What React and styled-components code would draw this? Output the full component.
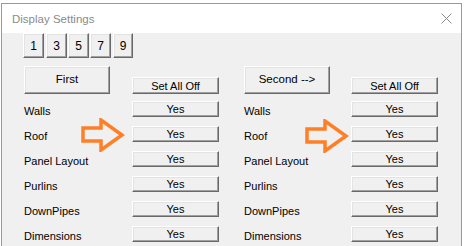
import React from "react";
import styled, { createGlobalStyle } from "styled-components";

const GlobalStyle = createGlobalStyle`
html, body {
  margin: 0;
  padding: 0;
  background: #ffffff;
  overflow: hidden;
}
body {
  font-family: "Liberation Sans", Arial, sans-serif;
}
`;

const Window = styled.div`
margin: 3px 0 0 1px;
width: 459px;
border: 1px solid #9a9a9a;
border-bottom: none;
background: #f0f0f0;
`;

const TitleBar = styled.div`
display: flex;
align-items: center;
justify-content: space-between;
height: 29px;
padding: 0 9px 0 10px;
background: #ffffff;
`;

const Title = styled.div`
font-size: 11.5px;
color: #8a8a8a;
`;

const Body = styled.div`
position: relative;
padding: 0 0 0 22px;
height: 213px;
overflow: hidden;
`;

const NumRow = styled.div`
display: flex;
margin-left: -1px;
`;

const Button = styled.div`
box-sizing: border-box;
display: flex;
align-items: center;
justify-content: center;
flex-shrink: 0;
background: #f0f0f0;
border-top: 1px solid #ffffff;
border-left: 1px solid #ffffff;
border-right: 1px solid #696969;
border-bottom: 1px solid #696969;
box-shadow: inset -1px -1px 0 #a0a0a0, inset 1px 1px 0 #e3e3e3;
font-size: 11px;
color: #000;
white-space: nowrap;
`;

const NumButton = styled(Button)`
width: ${(p) => p.$w}px;
height: 25px;
margin-left: ${(p) => p.$gap}px;
font-size: 12px;
`;

const Columns = styled.div`
display: flex;
margin-top: 8px;
`;

const Group = styled.div`
width: 220px;
flex-shrink: 0;
display: flex;
flex-direction: column;
`;

const HeaderRow = styled.div`
display: flex;
align-items: flex-end;
margin-bottom: 7px;
`;

const BigButton = styled(Button)`
width: 86px;
height: 28px;
padding-bottom: 2px;
font-size: 11.5px;
`;

const SmallButton = styled(Button)`
width: 87px;
height: ${(p) => p.$h || 16}px;
margin-left: ${(p) => p.$offset}px;
`;

const Row = styled.div`
display: flex;
align-items: center;
height: 16px;
margin-bottom: 9px;
`;

const Label = styled.div`
width: ${(p) => p.$offset + 86}px;
flex-shrink: 0;
font-size: 11px;
padding-top: 3px;
color: #000;
`;

const Arrow = styled.svg`
position: absolute;
left: ${(p) => p.$x}px;
top: ${(p) => p.$y}px;
`;

const nums = [
  ["1", 21, 0],
  ["3", 21, 2],
  ["5", 21, 1],
  ["7", 21, 1],
  ["9", 20, 2],
];

const rows = ["Walls", "Roof", "Panel Layout", "Purlins", "DownPipes", "Dimensions"];

function Settings({ title, offset }) {
  return (
    <Group>
      <HeaderRow>
        <BigButton>{title}</BigButton>
        <SmallButton $offset={offset} $h={17}>Set All Off</SmallButton>
      </HeaderRow>
      {rows.map((r) => (
        <Row key={r}>
          <Label $offset={offset}>{r}</Label>
          <SmallButton $offset={0}>Yes</SmallButton>
        </Row>
      ))}
    </Group>
  );
}

function OrangeArrow({ x, y }) {
  return (
    <Arrow $x={x} $y={y} width="44" height="34" viewBox="0 0 44 34">
      <polygon
        points="2,10 20,10 20,2 41,17 20,32 20,23 2,23"
        fill="none"
        stroke="#ff7f27"
        strokeWidth="3.5"
        strokeLinejoin="miter"
      />
    </Arrow>
  );
}

export default function App() {
  return (
    <>
      <GlobalStyle />
      <Window>
        <TitleBar>
          <Title>Display Settings</Title>
          <svg width="11" height="11" viewBox="0 0 11 11">
            <path d="M0.5 0.5 L10.5 10.5 M10.5 0.5 L0.5 10.5" stroke="#8a8a8a" strokeWidth="1" />
          </svg>
        </TitleBar>
        <Body>
          <NumRow>
            {nums.map(([n, w, g]) => (
              <NumButton key={n} $w={w} $gap={g}>{n}</NumButton>
            ))}
          </NumRow>
          <Columns>
            <Settings title="First" offset={22} />
            <Settings title="Second -->" offset={21} />
          </Columns>
          <OrangeArrow x={79} y={85} />
          <OrangeArrow x={303} y={86} />
        </Body>
      </Window>
    </>
  );
}
